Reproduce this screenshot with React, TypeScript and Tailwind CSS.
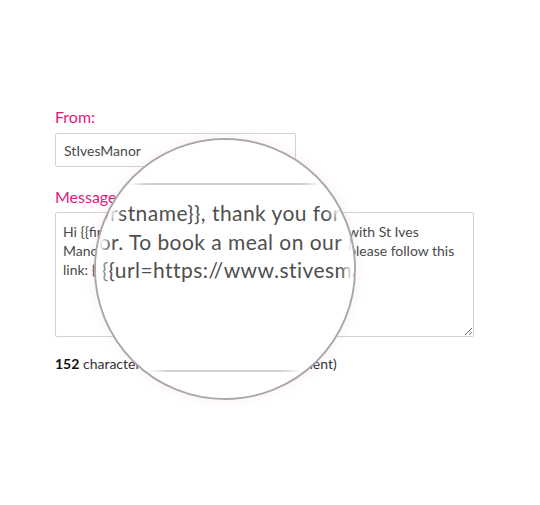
const FONT = "font-['Lato','Open_Sans',sans-serif]"

const MESSAGE_LINES = [
  'Hi {{firstname}}, thank you for your recent stay with St Ives',
  'Manor. To book a meal on our restaurant now, please follow this',
  'link: {{url=https://www.stivesmanor.com}}',
]

// Magnifying lens laid over the message box
function Lens() {
  return (
    <div className="pointer-events-none absolute left-[94px] top-[138px] h-[262px] w-[262px] overflow-hidden rounded-full border-2 border-[#a9a9ab] bg-white shadow-[0_0_6px_4px_rgba(230,25,125,0.04)]">
      {/* magnified textarea borders */}
      <div className="absolute left-0 right-0 top-[43px] h-[2px] bg-[#cfcfcf]" />
      <div className="absolute left-0 right-0 top-[230px] h-[2px] bg-[#cfcfcf]" />
      {/* magnified text */}
      <div className="absolute left-[-40px] top-[59px] whitespace-nowrap text-[21px] leading-[28.5px] tracking-[0.45px] text-[#4f4f4f]">
        {MESSAGE_LINES.map((l) => (
          <div key={l}>{l}</div>
        ))}
      </div>
      {/* soft inner edge */}
      <div className="absolute inset-0 rounded-full shadow-[inset_0_0_9px_7px_#fff]" />
    </div>
  )
}

export default function App() {
  return (
    <div className={`relative min-h-[505px] w-[540px] bg-white ${FONT}`}>
      <div className="flex flex-col pl-[55px] pt-[107px]">
        <label className="text-[16px] leading-[20px] text-[#e3197c]">From:</label>
        <div className="mt-[6px] flex h-[34px] w-[241px] items-center rounded-[2px] border border-[#d2d2d2] px-[8px] text-[14px] text-[#4a4a4a]">
          StIvesManor
        </div>

        <label className="mt-[20px] text-[16px] leading-[20px] text-[#e3197c]">Message:</label>
        <textarea
          readOnly
          wrap="off"
          value={MESSAGE_LINES.join('\n')}
          className="mt-[5px] h-[125px] w-[419px] overflow-hidden rounded-[2px] border border-[#d2d2d2] px-[7px] pt-[9px] text-[14px] leading-[19px] text-[#4a4a4a] outline-none"
        />

        <p className="mt-[18px] text-[14px] leading-[18px] text-[#333]">
          <span className="font-bold text-[#111]">152</span> characters (this will be sent as 1 segment)
        </p>
      </div>
      <Lens />
    </div>
  )
}
